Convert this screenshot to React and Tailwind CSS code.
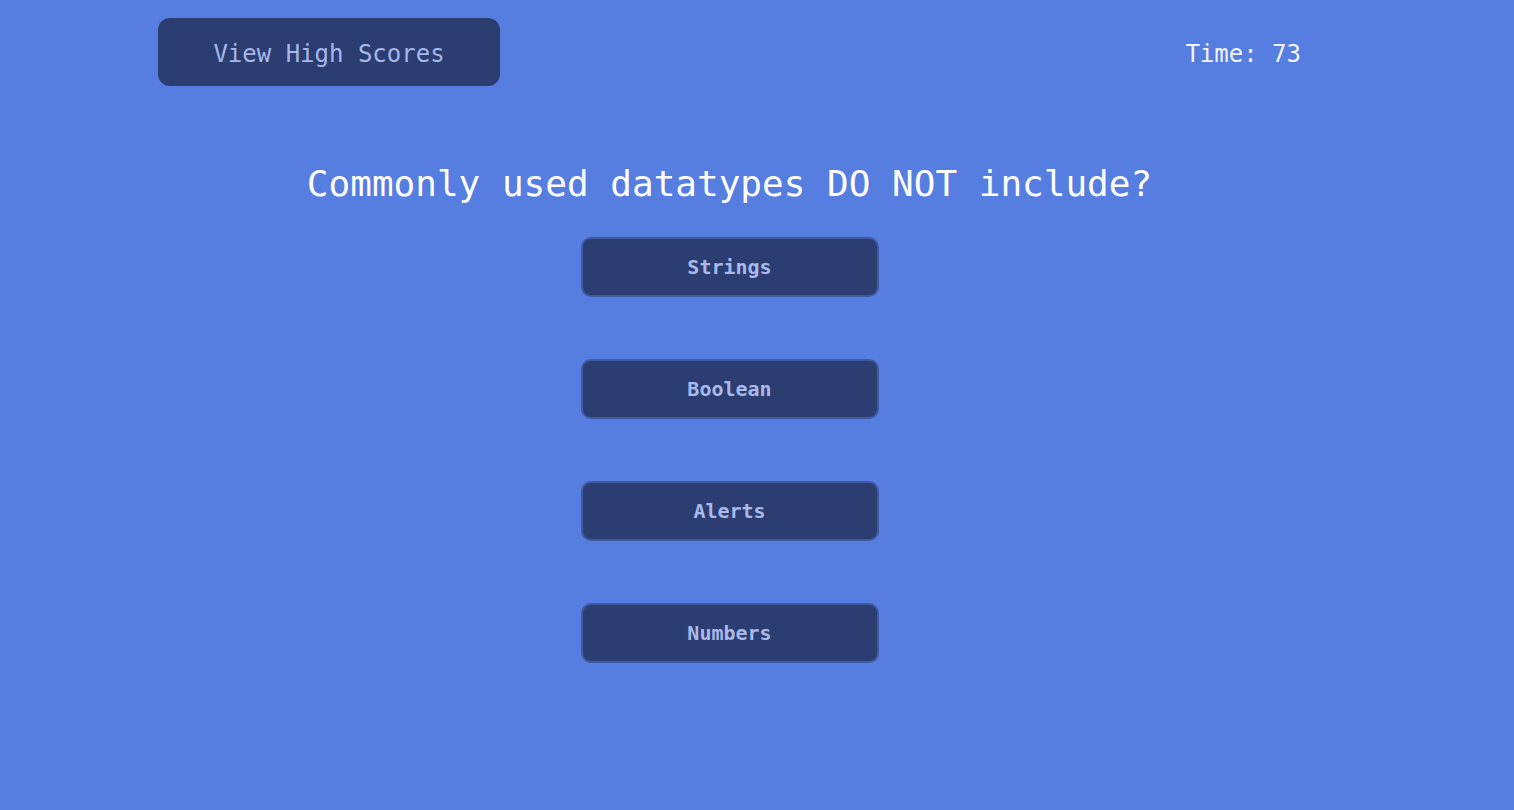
const ANSWERS = ["Strings", "Boolean", "Alerts", "Numbers"];

export default function App() {
  return (
    <div className="min-h-screen w-full bg-[#567de0] font-['DejaVu_Sans_Mono','Liberation_Mono',monospace]">
      <div className="ml-[158px] w-[1143px] pt-[18px]">
        <header className="flex items-center justify-between">
          <button className="h-[68px] w-[342px] rounded-xl bg-[#2c3d71] pt-[3px] text-[24px] text-[#a6b8ea]">
            View High Scores
          </button>
          <div className="pt-[3px] text-[24px] text-[#f1f4fd]">Time: 73</div>
        </header>

        <main className="mt-[75px] flex flex-col items-center">
          <h1 className="text-[36px] leading-[46px] text-white">Commonly used datatypes DO NOT include?</h1>
          <div className="mt-[30px] flex flex-col items-center gap-[62px]">
            {ANSWERS.map((answer) => (
              <button
                key={answer}
                className="h-[60px] w-[298px] rounded-[10px] border-2 border-[#41599e] bg-[#2c3d71] text-[20px] font-bold text-[#a8b9ec]"
              >
                {answer}
              </button>
            ))}
          </div>
        </main>
      </div>
    </div>
  );
}
